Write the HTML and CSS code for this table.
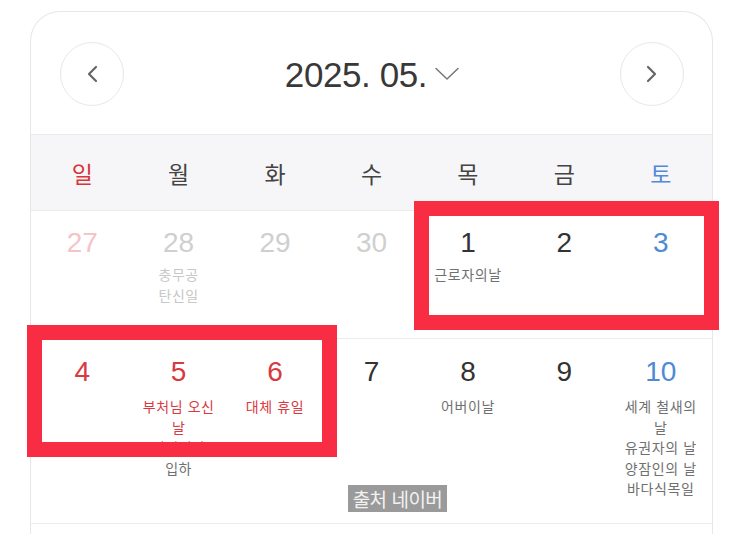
FILE: index.html
```html
<!DOCTYPE html>
<html lang="ko">
<head>
<meta charset="utf-8">
<title>2025. 05. 달력</title>
<link rel="stylesheet" href="styles.css">
</head>
<body>
<div class="page">
  <div class="card">
    <div class="header">
      <button class="nav" aria-label="이전 달">
        <svg width="14" height="18" viewBox="0 0 14 18"><path d="M11 2 L4 9 L11 16" fill="none" stroke="#666" stroke-width="2.2" stroke-linecap="round" stroke-linejoin="round"/></svg>
      </button>
      <div class="title">
        <span class="title-text">2025. 05.</span>
        <svg class="caret" width="24" height="14" viewBox="0 0 24 14"><path d="M1 1.5 L12 12 L23 1.5" fill="none" stroke="#777" stroke-width="1.5" stroke-linecap="round" stroke-linejoin="round"/></svg>
      </div>
      <button class="nav" aria-label="다음 달">
        <svg width="14" height="18" viewBox="0 0 14 18"><path d="M3 2 L10 9 L3 16" fill="none" stroke="#666" stroke-width="2.2" stroke-linecap="round" stroke-linejoin="round"/></svg>
      </button>
    </div>

    <div class="weekdays">
      <div class="wd sun">일</div>
      <div class="wd">월</div>
      <div class="wd">화</div>
      <div class="wd">수</div>
      <div class="wd">목</div>
      <div class="wd">금</div>
      <div class="wd sat">토</div>
    </div>

    <div class="week week1">
      <div class="day"><div class="num faded-sun">27</div></div>
      <div class="day"><div class="num faded">28</div><div class="ev faded">충무공<br>탄신일</div></div>
      <div class="day"><div class="num faded">29</div></div>
      <div class="day"><div class="num faded">30</div></div>
      <div class="day"><div class="num">1</div><div class="ev nowrap">근로자의날</div></div>
      <div class="day"><div class="num">2</div></div>
      <div class="day"><div class="num sat">3</div></div>
    </div>

    <div class="week week2">
      <div class="day"><div class="num red">4</div></div>
      <div class="day"><div class="num red">5</div><div class="ev red">부처님 오신 날</div><div class="ev">어린이날</div><div class="ev">입하</div></div>
      <div class="day"><div class="num red">6</div><div class="ev red">대체 휴일</div></div>
      <div class="day"><div class="num">7</div></div>
      <div class="day"><div class="num">8</div><div class="ev">어버이날</div></div>
      <div class="day"><div class="num">9</div></div>
      <div class="day"><div class="num sat">10</div><div class="ev">세계 철새의 날</div><div class="ev">유권자의 날</div><div class="ev">양잠인의 날</div><div class="ev">바다식목일</div></div>
    </div>

    <div class="week week3"></div>
  </div>

  <div class="mark mark-a"></div>
  <div class="mark mark-b"></div>
  <div class="source">출처 네이버</div>
</div>
</body>
</html>
```

FILE: styles.css
```css
html, body {
  margin: 0;
  padding: 0;
  background: #ffffff;
  overflow: hidden;
}

body {
  font-family: "Liberation Sans", "Noto Sans CJK KR", sans-serif;
  color: #333333;
}

.page {
  position: relative;
  width: 743px;
  height: 534px;
  overflow: hidden;
}

.card {
  margin: 11px 0 0 30px;
  width: 681px;
  border: 1px solid #e7e7e7;
  border-bottom: none;
  border-radius: 30px 30px 0 0;
  background: #ffffff;
}

.header {
  height: 122px;
  display: flex;
  align-items: center;
  justify-content: space-between;
  padding: 0 28px 0 29px;
  border-bottom: 1px solid #ebebeb;
}

.nav {
  width: 64px;
  height: 64px;
  border-radius: 50%;
  border: 1.5px solid #e8e8e8;
  background: #ffffff;
  display: flex;
  align-items: center;
  justify-content: center;
  padding: 0;
  margin-top: 2px;
}

.title {
  display: flex;
  align-items: center;
  gap: 8px;
  margin-left: 0;
  margin-top: 4px;
}

.title-text {
  font-family: "Liberation Sans", sans-serif;
  font-size: 35px;
  letter-spacing: -0.4px;
  color: #383838;
}

.caret {
  margin-top: -3px;
}

.weekdays {
  display: grid;
  grid-template-columns: repeat(7, 1fr);
  height: 75px;
  padding: 0 3px;
  background: #f6f6f8;
  border-bottom: 1px solid #ececec;
}

.wd {
  display: flex;
  align-items: center;
  justify-content: center;
  font-family: "Noto Sans CJK KR", sans-serif;
  font-size: 23px;
  color: #444444;
}

.wd.sun { color: #d8343b; }
.wd.sat { color: #5389d6; }

.week {
  display: grid;
  grid-template-columns: repeat(7, 1fr);
  padding: 0 3px;
  border-bottom: 1px solid #ececec;
}

.week1 { height: 127px; }
.week2 { height: 184px; }
.week3 { height: 120px; border-bottom: none; }

.day {
  display: flex;
  flex-direction: column;
  align-items: center;
  padding: 17px 4px 0;
  text-align: center;
}

.week2 .day { padding-top: 18px; }

.num {
  font-family: "Liberation Sans", sans-serif;
  font-size: 28px;
  line-height: 30px;
  color: #333333;
  margin-bottom: 6px;
}

.week2 .num { margin-bottom: 9px; }

.ev {
  font-family: "Noto Sans CJK KR", sans-serif;
  font-size: 14px;
  line-height: 20.5px;
  color: #707070;
  letter-spacing: 0.6px;
}

.nowrap { white-space: nowrap; }

.num.red, .ev.red { color: #d9393f; }
.num.sat { color: #4d8ad8; }
.num.faded { color: #cfcfcf; }
.num.faded-sun { color: #f5c4c7; }
.ev.faded { color: #c8c8c8; }

.mark {
  position: absolute;
  border: 15px solid #f82c43;
  box-sizing: border-box;
}

.mark-a {
  left: 414px;
  top: 201px;
  width: 305px;
  height: 129px;
}

.mark-b {
  left: 27px;
  top: 325px;
  width: 310px;
  height: 132px;
}

.source {
  position: absolute;
  left: 348px;
  top: 485px;
  width: 99px;
  height: 27px;
  background: #9a9a9a;
  color: #f2f2f2;
  font-family: "Noto Sans CJK KR", sans-serif;
  font-size: 19px;
  line-height: 27px;
  text-align: center;
  letter-spacing: -0.5px;
  white-space: nowrap;
}
```
